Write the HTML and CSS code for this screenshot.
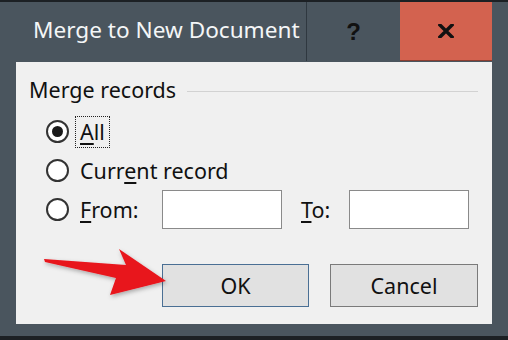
FILE: index.html
```html
<!DOCTYPE html>
<html lang="en">
<head>
    <meta charset="UTF-8">
    <title>Merge to New Document</title>
    <link rel="stylesheet" href="styles.css">
</head>
<body>
    <div class="window">
        <!-- title bar -->
        <div class="titlebar">
            <div class="title">Merge to New Document</div>
            <div class="tb-btn help">?</div>
            <div class="tb-btn close">
                <svg width="16" height="14" viewBox="0 0 16 14"><path d="M2 1 L14 13 M14 1 L2 13" stroke="#111" stroke-width="3.4" stroke-linecap="square"/></svg>
            </div>
        </div>

        <div class="dialog">
            <div class="group-head">
                <span>Merge records</span>
                <div class="rule"></div>
            </div>

            <div class="row">
                <span class="radio checked"></span>
                <span class="label focus"><u>A</u>ll</span>
            </div>
            <div class="row">
                <span class="radio"></span>
                <span class="label">Curr<u>e</u>nt record</span>
            </div>
            <div class="row">
                <span class="radio"></span>
                <span class="label from"><u>F</u>rom:</span>
                <div class="field"></div>
                <span class="label to"><u>T</u>o:</span>
                <div class="field"></div>
            </div>

            <div class="buttons">
                <div class="btn ok">OK</div>
                <div class="btn">Cancel</div>
            </div>

            <!-- red pointer arrow -->
            <svg class="arrow" width="140" height="56" viewBox="0 0 140 56">
                <defs>
                    <filter id="sh" x="-20%" y="-30%" width="140%" height="160%">
                        <feDropShadow dx="1" dy="2" stdDeviation="2" flood-color="#000" flood-opacity="0.3"/>
                    </filter>
                </defs>
                <polygon points="2,12 84,18 77,2 124,34 68,48 74,31 3,15" fill="#e8141c" filter="url(#sh)"/>
            </svg>
        </div>
    </div>
</body>
</html>
```

FILE: styles.css
```css
* {
    margin: 0;
    padding: 0;
    box-sizing: border-box;
}

body {
    width: 508px;
    height: 340px;
    background: #1c2024;
    overflow: hidden;
    font-family: "Noto Sans", "Open Sans", sans-serif;
}

.window {
    margin-top: 2px;
    height: 334px;
    background: #4a555e;
    padding: 0 16px 0 16px;
}

/* title bar */
.titlebar {
    display: flex;
    height: 60px;
    margin: 0 -16px 0 -16px;
    padding-right: 16px;
}

.title {
    flex: 1;
    color: #f4f6f7;
    font-size: 22.6px;
    padding-left: 33px;
    line-height: 56px;
}

.tb-btn {
    display: flex;
    align-items: center;
    justify-content: center;
    height: 59px;
}

.help {
    width: 94px;
    border-left: 1px solid #2f3840;
    color: #111;
    font-weight: bold;
    font-size: 24px;
    font-family: "Liberation Sans", sans-serif;
}

.close {
    width: 92px;
    background: #d3624f;
    border-bottom: 1px solid #8a3d30;
}

/* dialog body */
.dialog {
    position: relative;
    height: 262px;
    background: #f0f0f0;
    color: #111;
    font-size: 21.5px;
}

.group-head {
    display: flex;
    align-items: center;
    padding: 16px 14px 0 13px;
    height: 40px;
    line-height: 24px;
}

.rule {
    flex: 1;
    height: 1px;
    background: #d2d2d2;
    margin-left: 11px;
    margin-top: 2px;
}

.row {
    display: flex;
    align-items: center;
    height: 39px;
    padding-left: 30px;
}

.row:nth-child(2) {
    margin-top: 10px;
}

.radio {
    width: 23px;
    height: 23px;
    border: 2px solid #333;
    border-radius: 50%;
    background: #fff;
    display: flex;
    align-items: center;
    justify-content: center;
}

.radio.checked::after {
    content: "";
    width: 11px;
    height: 11px;
    border-radius: 50%;
    background: #1a1a1a;
}

.label {
    margin-left: 11px;
    line-height: 26px;
}

.label u {
    text-underline-offset: 3px;
}

.focus {
    outline: 1px dotted #222;
    outline-offset: 2px;
    padding: 0 2px 0 2px;
    margin-left: 9px;
}

.from {
    width: 82px;
}

.field {
    width: 120px;
    height: 39px;
    background: #fff;
    border: 1px solid #8a8a8a;
}

.to {
    margin-left: 19px;
    width: 48px;
}

.buttons {
    display: flex;
    gap: 21px;
    padding-left: 146px;
    margin-top: 35px;
}

.btn {
    width: 148px;
    height: 43px;
    background: #e1e1e1;
    border: 1px solid #7a7a7a;
    text-align: center;
    line-height: 41px;
}

.btn.ok {
    width: 147px;
    border-color: #4a6f94;
}

.arrow {
    position: absolute;
    left: 26px;
    top: 185px;
}
```
